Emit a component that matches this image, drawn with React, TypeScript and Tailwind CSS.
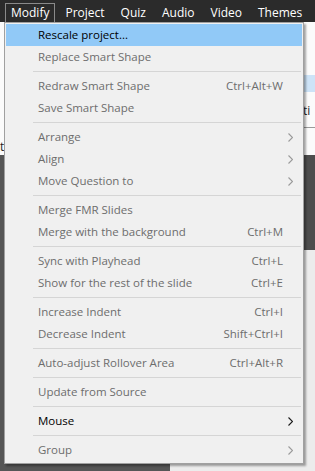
import type { ReactNode } from "react";

type Item =
  | { sep: true }
  | { sep?: false; label: string; shortcut?: string; sub?: boolean; active?: boolean; hover?: boolean };

const items: Item[] = [
  { label: "Rescale project...", active: true, hover: true },
  { label: "Replace Smart Shape" },
  { sep: true },
  { label: "Redraw Smart Shape", shortcut: "Ctrl+Alt+W" },
  { label: "Save Smart Shape" },
  { sep: true },
  { label: "Arrange", sub: true },
  { label: "Align", sub: true },
  { label: "Move Question to", sub: true },
  { sep: true },
  { label: "Merge FMR Slides" },
  { label: "Merge with the background", shortcut: "Ctrl+M" },
  { sep: true },
  { label: "Sync with Playhead", shortcut: "Ctrl+L" },
  { label: "Show for the rest of the slide", shortcut: "Ctrl+E" },
  { sep: true },
  { label: "Increase Indent", shortcut: "Ctrl+I" },
  { label: "Decrease Indent", shortcut: "Shift+Ctrl+I" },
  { sep: true },
  { label: "Auto-adjust Rollover Area", shortcut: "Ctrl+Alt+R" },
  { sep: true },
  { label: "Update from Source" },
  { sep: true },
  { label: "Mouse", sub: true, active: true },
  { sep: true },
  { label: "Group", sub: true },
];

const menus = ["Modify", "Project", "Quiz", "Audio", "Video", "Themes"];

const Chevron = ({ dark }: { dark?: boolean }) => (
  <svg width="5" height="9" viewBox="0 0 5 9" className="shrink-0">
    <polyline
      points="0.5,0.5 4.5,4.5 0.5,8.5"
      fill="none"
      stroke={dark ? "#1a1a1a" : "#9a9a9a"}
      strokeWidth="1.1"
    />
  </svg>
);

const Row = ({ children, hover }: { children: ReactNode; hover?: boolean }) => (
  <div className={`flex h-[22px] items-center pl-[32px] pr-[19px] ${hover ? "bg-[#91c9f7]" : ""}`}>
    {children}
  </div>
);

export default function App() {
  return (
    <div
      className="relative w-[315px] h-[471px] overflow-hidden bg-[#555555] text-[12px]"
      style={{ fontFamily: '"Open Sans", "Noto Sans", sans-serif' }}
    >
      <div className="flex h-full flex-col">
        {/* menu bar */}
        <div className="flex h-[22px] items-end bg-[#2b2b2b] pl-[5px] text-white">
          {menus.map((m, i) => (
            <div
              key={m}
              className={`flex h-[19px] items-center ${
                i === 0 ? "border border-b-0 border-[#8a8a8a] px-[5px] mr-[4px]" : "px-[6px] mr-[4px]"
              }`}
            >
              {m}
            </div>
          ))}
        </div>

        {/* workspace behind the menu */}
        <div className="flex h-[133px] bg-[#fbfbfb] text-[#222]">
          <div className="flex w-[6px] flex-col justify-end pb-[1px] leading-[14px]">
            <span>t</span>
          </div>
          <div className="flex-1" />
          <div className="flex w-[12px] flex-col">
            <div className="h-[53px]" />
            <div className="h-[17px] bg-[#cde3f7]" />
            <div className="flex h-[26px] items-end leading-[14px]">
              <span>ti</span>
            </div>
            <div className="h-[9px]" />
            <div className="h-px bg-[#9a9a9a]" />
          </div>
        </div>
        <div className="flex flex-1">
          <div className="w-[170px] bg-[#565656]" />
          <div className="flex flex-1 flex-col">
            <div className="h-[95px] bg-[#4d4d4d]" />
            <div className="flex-1 bg-[#ececec]" />
          </div>
        </div>
      </div>

      {/* dropdown */}
      <div className="absolute left-[4px] top-[22px] w-[300px] border border-[#a0a0a0] bg-[#f0f0f0] p-[1px] pb-[2px] text-[11.5px] shadow-[2px_2px_2px_rgba(0,0,0,0.35)]">
        {items.map((it, i) =>
          it.sep ? (
            <div key={i} className="flex h-[7px] items-center pl-[27px] pr-[1px]">
              <div className="h-px flex-1 bg-[#d5d5d5]" />
            </div>
          ) : (
            <Row key={i} hover={it.hover}>
              <span className={`flex-1 ${it.active ? "text-black" : "text-[#6d6d6d]"}`}>{it.label}</span>
              {it.shortcut && <span className="text-[#6d6d6d]">{it.shortcut}</span>}
              {it.sub && (
                <span className="-mr-[10px]">
                  <Chevron dark={it.active} />
                </span>
              )}
            </Row>
          )
        )}
      </div>
    </div>
  );
}
